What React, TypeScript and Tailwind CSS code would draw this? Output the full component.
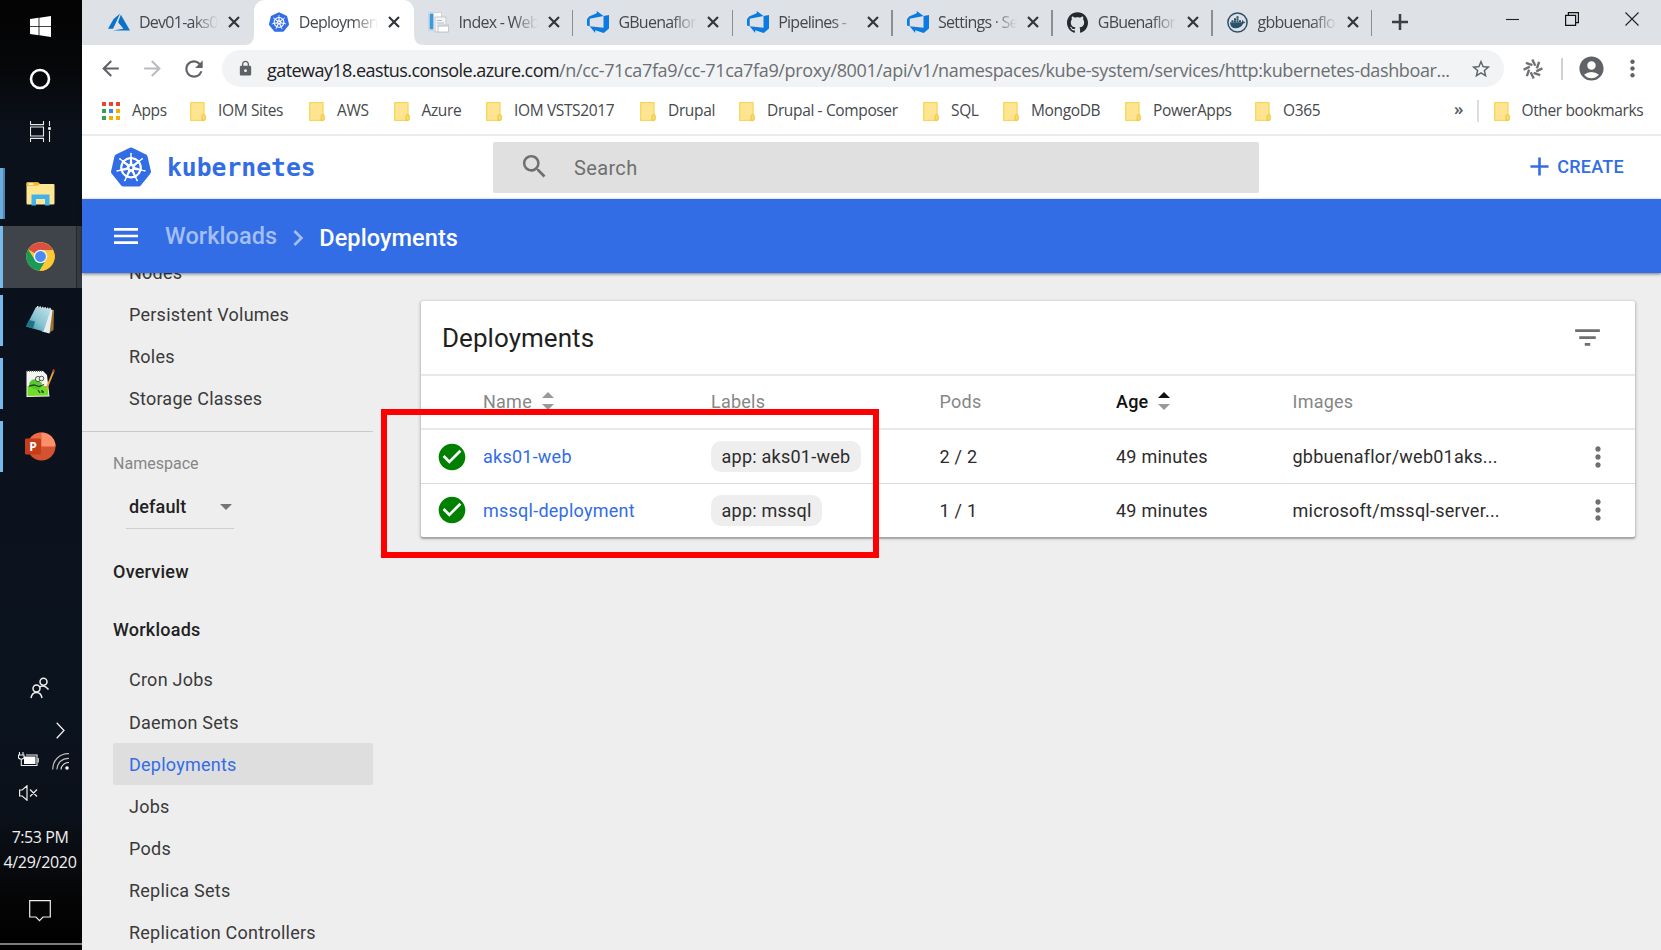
import type { ReactNode } from 'react';
import {
  MdAccountCircle,
  MdAdd,
  MdArrowBack,
  MdArrowForward,
  MdCheckCircle,
  MdChevronRight,
  MdFilterList,
  MdLock,
  MdMenu,
  MdMoreVert,
  MdRefresh,
  MdSearch,
  MdStarBorder,
} from 'react-icons/md';
import { SiGithub, SiKubernetes } from 'react-icons/si';

/* ---------- Taskbar ---------- */

function TaskItem({ className, children }: { className: string; children: ReactNode }) {
  return <div className={`flex w-full shrink-0 items-center justify-center pr-[1.5px] ${className}`}>{children}</div>;
}

function ChromeIcon() {
  return (
    <svg width="29" height="29" viewBox="0 0 29 29">
      <circle cx="14.5" cy="14.5" r="14.3" fill="#fcc934" />
      <path d="M14.5 14.5 L2.1 7.35 A14.3 14.3 0 0 1 26.9 7.9 L14.5 7.9 Z" fill="#d94f43" />
      <path d="M2.1 7.35 A14.3 14.3 0 0 0 13.6 28.8 L20.2 17.8 L14.5 14.5 L8.8 17.8 Z" fill="#1a9a57" />
      <path d="M14.5 7.9 L26.9 7.9 A14.3 14.3 0 0 1 13.6 28.8 L20.2 17.8 Z" fill="#fcc934" />
      <circle cx="14.5" cy="14.5" r="6.8" fill="#f1f1f1" />
      <circle cx="14.5" cy="14.5" r="5.4" fill="#4a8af4" />
    </svg>
  );
}

function Taskbar() {
  return (
    <div className="flex h-[950px] w-[82px] shrink-0 flex-col bg-[linear-gradient(to_bottom,#030303_0%,#060709_7%,#0b111b_14%,#0b131f_75%,#0b111a_86%,#050505_95%,#000_100%)] font-['Open_Sans',sans-serif] text-[#f0f0f0]">
      <TaskItem className="h-[53px]">
        <svg width="21" height="21" viewBox="0 0 21 21" fill="#fff">
          <path d="M0 3 L8.6 1.8 V10 H0 Z M9.4 1.7 L21 0 V10 H9.4 Z M0 10.8 H8.6 V19.2 L0 18 Z M9.4 10.8 H21 V21 L9.4 19.3 Z" />
        </svg>
      </TaskItem>
      <TaskItem className="h-[52px]">
        <svg width="22" height="22" viewBox="0 0 22 22">
          <circle cx="11" cy="11" r="9" fill="none" stroke="#fff" strokeWidth="2.6" />
        </svg>
      </TaskItem>
      <TaskItem className="h-[53px]">
        <svg width="21" height="21" viewBox="0 0 21 21" fill="none" stroke="#e8e8e8" strokeWidth="1.1">
          <path d="M.5 0 V3.6 H13.5 V0 M.5 21 V17.4 H13.5 V21 M.5 6 H13.5 V15 H.5 Z M19.5 0 V5 M19.5 10 V21" />
          <rect x="18.2" y="6.2" width="2.6" height="2.6" fill="#fff" stroke="none" />
        </svg>
      </TaskItem>
      <TaskItem className="relative mt-2.5 h-[51px]">
        <div className="absolute inset-y-0 left-0 w-[5px] border-r-2 border-[#5084ab] bg-[#6aaee0]" />
        <svg width="29" height="24" viewBox="0 0 29 24">
          <path d="M.5 1.5 Q.5 .5 1.5 .5 H12 L14 2 H27.500 Q28.500 2 28.500 3 V21 Q28.500 22.500 27.500 22.500 H1.500 Q.5 22.500 .5 21 Z" fill="#ffe693" />
          <path d="M.5 1.5 Q.5 .3 1.5 .3 H12 L13.500 1.800 L12 3.800 H.5 Z" fill="#f2b92d" />
          <rect x="2.500" y="1.300" width="5" height="1.500" fill="#fff" />
          <path d="M5.500 23.500 V12.500 H23.500 V23.500 H19 V17 H10 V23.500 Z" fill="#3fb3ea" />
        </svg>
      </TaskItem>
      <TaskItem className="relative mt-[7px] h-[62px] bg-[#3f434a] pb-px">
        <div className="absolute inset-y-0 left-0 w-[3px] bg-[#76b9ed]" />
        <div className="absolute inset-y-0 right-0 w-[6px] border-l border-[#23262b] bg-[#363a41]" />
        <ChromeIcon />
      </TaskItem>
      <TaskItem className="relative mt-[7px] h-[51px] pb-0.5">
        <div className="absolute inset-y-0 left-0 w-[3px] bg-[#76b9ed]" />
        <svg width="29" height="28" viewBox="0 0 29 28">
          <defs>
            <linearGradient id="pad" x1="0" y1="1" x2="1" y2="0">
              <stop offset="0" stopColor="#2d8ba0" />
              <stop offset=".45" stopColor="#86c3d1" />
              <stop offset="1" stopColor="#c6e4ea" />
            </linearGradient>
          </defs>
          <path d="M24 3.500 L28 4 L27.500 24 L23 27 Z" fill="#9c7136" />
          <path d="M22 3 L26.500 4 L23.500 27.500 L16 25.500 Z" fill="#e8eef0" />
          <path d="M10 1 L25 3 L17.500 25.500 L0 20.500 Z" fill="url(#pad)" />
          <path d="M3 14 L9 15.500 L7 22.500 L0 20.500 Z" fill="#1f7487" />
          <path d="M11 .800 L25 3" stroke="#dfe9ea" strokeWidth="1.800" strokeDasharray="1.500 1" />
        </svg>
      </TaskItem>
      <TaskItem className="relative mt-3 h-[51px]">
        <div className="absolute inset-y-0 left-0 w-[3px] bg-[#76b9ed]" />
        <svg width="29" height="29" viewBox="0 0 29 29">
          <path d="M.5 2 H17 L21 6 L23.500 27.500 L.5 28 Z" fill="#f4f5f1" />
          <path d="M1.500 17 H21.500 L22.500 26.500 L1.500 27 Z" fill="#6fdc2a" />
          <path d="M1 2.300 H16" stroke="#777" strokeWidth="1.600" strokeDasharray="1 1" />
          <path d="M3 15 Q5 9 11 10.500 L16 14 L14 20 Q8 22 5 18 Z" fill="#55c92d" />
          <circle cx="12" cy="10" r="2.600" fill="#e7f2e1" stroke="#333" strokeWidth=".8" />
          <circle cx="15.500" cy="9.500" r="2.300" fill="#e7f2e1" stroke="#333" strokeWidth=".8" />
          <path d="M3 17 L8 16 L13 17.500 L18 15.500 M12 21 L14 24 M16 21 V23 H18" stroke="#25451a" strokeWidth="1.300" fill="none" />
          <path d="M27 1.500 L28.500 2.500 L21.500 19.500 L19.500 21.500 L19.800 18.500 Z" fill="#e8a23a" />
          <path d="M27 0 L29 1 L28 3.500 L26.200 2.700 Z" fill="#bb3f36" />
        </svg>
      </TaskItem>
      <TaskItem className="relative mt-3 h-[51px]">
        <div className="absolute inset-y-0 left-0 w-[3px] bg-[#76b9ed]" />
        <svg width="31" height="29" viewBox="0 0 31 29">
          <circle cx="16.500" cy="14.500" r="14" fill="#d35230" />
          <path d="M16.500 .5 A14 14 0 0 0 2.500 14.500 H16.500 Z" fill="#ed6c47" />
          <path d="M16.500 .5 A14 14 0 0 1 30.500 14.500 H16.500 Z" fill="#ff8f6b" />
          <rect x="0" y="6.500" width="16" height="16" rx="1.300" fill="#c43e1c" />
          <text x="8" y="18.800" textAnchor="middle" fontSize="12" fontWeight="700" fill="#fff">P</text>
        </svg>
      </TaskItem>
      <div className="flex-1" />
      <TaskItem className="h-[42px]">
        <svg width="20" height="22" viewBox="0 0 20 22" fill="none" stroke="#f0f0f0" strokeWidth="1.500">
          <circle cx="13.500" cy="4.700" r="3.500" />
          <path d="M9 10.500 Q13.500 6.500 18.500 12.500" />
          <circle cx="6.500" cy="11.500" r="3.500" fill="#0b121d" />
          <path d="M1 21 Q2 15.500 6.500 15.500 Q11 15.500 12 21" />
        </svg>
      </TaskItem>
      <div className="flex h-[43px] items-center justify-end pr-[17px]">
        <svg width="9" height="17" viewBox="0 0 9 17" fill="none" stroke="#eee" strokeWidth="1.300">
          <path d="M.7 .7 L8 8.500 L.7 16.300" />
        </svg>
      </div>
      <div className="flex h-[20px] items-start justify-between pr-3 pl-[18px]">
        <svg width="21" height="15" viewBox="0 0 21 15" fill="none" stroke="#eee" strokeWidth="1.100">
          <path d="M1.500 0 V3 M5 0 V3 M.5 3 H6 V6 Q3.300 8.500 .5 6 Z M3.300 7.500 V13.500 H19 V3 H8" />
          <rect x="6" y="4.500" width="11.500" height="7.500" fill="#fff" stroke="none" />
          <path d="M20.200 6 V10.500" />
        </svg>
        <svg className="mt-px" width="18" height="17" viewBox="0 0 18 17" fill="none" stroke="#bbb" strokeWidth="1.200">
          <path d="M.7 16.500 A15.500 15.500 0 0 1 17 .7" />
          <path d="M4.800 16.500 A11.500 11.500 0 0 1 17 5.300" />
          <path d="M9 16.500 A7.500 7.500 0 0 1 17 9.500" stroke="#ddd" />
          <circle cx="15" cy="15" r="1.800" fill="#fff" stroke="none" />
        </svg>
      </div>
      <div className="mt-[10px] flex h-[22px] items-center pl-[19px]">
        <svg width="19" height="16" viewBox="0 0 19 16" fill="none" stroke="#eee" strokeWidth="1.200">
          <path d="M.6 5 H3.200 L8 .8 V15.200 L3.200 11 H.6 Z M11 4.500 L18 11.500 M18 4.500 L11 11.500" />
        </svg>
      </div>
      <div className="mt-[21px] h-[25px] pr-0.5 text-center text-[16px] leading-[25px] tracking-[-0.45px] whitespace-nowrap">7:53 PM</div>
      <div className="h-[25px] pr-0.5 text-center text-[16px] leading-[25px] tracking-[-0.3px] whitespace-nowrap">4/29/2020</div>
      <TaskItem className="mt-[25px] h-[22px]">
        <svg width="22" height="22" viewBox="0 0 22 22" fill="none" stroke="#eee" strokeWidth="1.200">
          <path d="M.7 .7 H21.300 V17 H14 L10.500 20.700 L7 17 H.7 Z" />
        </svg>
      </TaskItem>
      <div className="mt-[21px] h-[7px] border-t-2 border-[#7a7c7f] bg-black" />
    </div>
  );
}

/* ---------- Browser chrome ---------- */

const devopsIcon = (
  <svg width="22" height="22" viewBox="0 0 24 24" fill="#0a7be0">
    <path d="M0 8.877L2.247 5.910l8.405-3.416V.022l7.370 5.393L2.966 8.338v8.225L0 15.707zm24-4.450v14.651l-5.753 4.900-9.303-3.057v3.056l-5.978-7.416 15.057 1.798V5.415z" />
  </svg>
);

const tabs: { label: string; icon: ReactNode; active?: boolean; divider?: boolean }[] = [
  {
    label: 'Dev01-aks0',
    icon: (
      <svg width="22" height="22" viewBox="0 0 24 24" fill="#0a72c8">
        <path d="M5.483 21.300H24L14.025 4.013l-3.038 8.347 5.836 6.938L5.483 21.300zM13.230 2.700L6.105 8.677 0 19.253h5.505v.014L13.230 2.700z" />
      </svg>
    ),
  },
  { label: 'Deploymen', icon: <SiKubernetes size={20} color="#326de6" />, active: true },
  {
    label: 'Index - Web',
    icon: (
      <svg width="21" height="21" viewBox="0 0 21 21">
        <rect x=".5" y=".5" width="13" height="18" fill="#fff" stroke="#cfd3d6" />
        <rect x="1.500" y="1.500" width="4" height="16" fill="#3a9bd8" />
        <rect x="7" y="5" width="11" height="15" fill="#f3f5f6" stroke="#c3c8cb" />
        <path d="M9 8.500 H14 M9 11 H16" stroke="#b5babd" />
        <rect x="10" y="13" width="10.500" height="7" fill="#fff" stroke="#c3c8cb" />
        <path d="M10 14 H20" stroke="#b5babd" />
      </svg>
    ),
    divider: true,
  },
  { label: 'GBuenaflor', icon: devopsIcon, divider: true },
  { label: 'Pipelines - ', icon: devopsIcon, divider: true },
  { label: 'Settings · Se', icon: devopsIcon, divider: true },
  { label: 'GBuenaflor', icon: <SiGithub size={21} color="#24292e" />, divider: true },
  {
    label: 'gbbuenaflo',
    icon: (
      <svg width="21" height="21" viewBox="0 0 21 21">
        <circle cx="10.500" cy="10.500" r="9.600" fill="none" stroke="#2b5169" strokeWidth="1.500" />
        <path d="M3 10.200 H14.800 Q15.500 8.800 15 7.800 Q16.300 8.300 16.600 9.700 Q17.700 9.500 18.500 10 Q17.800 11.400 16.200 11.500 Q14 16.300 8.500 16.300 Q3.300 16.300 3 10.200 Z M4.500 8.200 H6.500 V10 H4.500 Z M7 8.200 H9 V10 H7 Z M9.500 8.200 H11.500 V10 H9.500 Z M12 8.200 H14 V10 H12 Z M7 6.200 H9 V8 H7 Z M9.500 6.200 H11.500 V8 H9.500 Z M9.500 4.200 H11.500 V6 H9.500 Z" fill="#2b5169" />
      </svg>
    ),
    divider: true,
  },
];

function CloseGlyph() {
  return (
    <svg width="12" height="12" viewBox="0 0 12 12" stroke="#33373b" strokeWidth="2.200">
      <path d="M1 1 L11 11 M11 1 L1 11" />
    </svg>
  );
}

function TabStrip() {
  return (
    <div className="flex h-[45px] bg-[#dee1e6] pl-3">
      {tabs.map((tab, i) => (
        <div
          key={i}
          className={`relative flex w-[159.800px] shrink-0 items-center pb-px pl-[14px] ${tab.active ? 'rounded-t-[11px] bg-white' : ''}`}
        >
          {tab.active && (
            <>
              <svg className="absolute bottom-0 -left-[10px]" width="10" height="10" viewBox="0 0 10 10">
                <path d="M10 0 V10 H0 Q10 10 10 0 Z" fill="#fff" />
              </svg>
              <svg className="absolute -right-[10px] bottom-0" width="10" height="10" viewBox="0 0 10 10">
                <path d="M0 0 V10 H10 Q0 10 0 0 Z" fill="#fff" />
              </svg>
            </>
          )}
          <div className="flex w-[22px] shrink-0 justify-center">{tab.icon}</div>
          <div className="ml-[9px] w-[79px] shrink-0 overflow-hidden [mask-image:linear-gradient(to_right,black_68%,transparent)] text-[16px] leading-6 tracking-[-0.750px] whitespace-nowrap text-[#45494d]">
            {tab.label}
          </div>
          <div className="ml-[10px] shrink-0">
            <CloseGlyph />
          </div>
          {tab.divider && <div className="absolute top-[10px] right-0 h-[26px] w-[1.500px] bg-[#8b8f94]" />}
        </div>
      ))}
      <div className="flex w-[56px] items-center justify-center pb-px">
        <svg width="16" height="16" viewBox="0 0 16 16" stroke="#3c4043" strokeWidth="2.500">
          <path d="M8 0 V16 M0 8 H16" />
        </svg>
      </div>
      <div className="ml-auto flex h-[38px] items-center gap-[46px] pr-[22px]">
        <svg width="13" height="13" viewBox="0 0 13 13" stroke="#222" strokeWidth="1.100">
          <path d="M0 6.500 H13" />
        </svg>
        <svg width="14" height="14" viewBox="0 0 14 14" fill="none" stroke="#111" strokeWidth="1.200">
          <path d="M.6 3.400 H10.600 V13.400 H.6 Z M3.400 3.400 V.6 H13.400 V10.600 H10.600" />
        </svg>
        <svg width="14" height="14" viewBox="0 0 14 14" stroke="#222" strokeWidth="1.100">
          <path d="M.5 .5 L13.500 13.500 M13.500 .5 L.5 13.500" />
        </svg>
      </div>
    </div>
  );
}

function AddressBar() {
  return (
    <div className="flex h-[47px] items-center bg-white pl-[16px] text-[#5f6368]">
      <MdArrowBack size={25} />
      <MdArrowForward size={25} className="ml-[17px] text-[#b9bbbe]" />
      <MdRefresh size={26} className="ml-[16px]" />
      <div className="ml-[15px] flex h-[37px] w-[1282px] shrink-0 items-center rounded-full bg-[#f1f3f4] pl-[15px]">
        <MdLock size={17} />
        <div className="mt-[2px] ml-[13px] w-[1185px] shrink-0 text-[18px] leading-6 tracking-[-0.360px] whitespace-nowrap text-[#6b6f73]">
          <span className="tracking-[-0.560px] text-[#202124]">gateway18.eastus.console.azure.com</span>
          /n/cc-71ca7fa9/cc-71ca7fa9/proxy/8001/api/v1/namespaces/kube-system/services/http:kubernetes-dashboar...
        </div>
        <MdStarBorder size={22} className="ml-[18px] shrink-0" />
      </div>
      <svg className="ml-[19px] shrink-0" width="20" height="20" viewBox="0 0 20 20" stroke="#6f7174" strokeWidth="2.400" fill="none">
        {[0, 45, 90, 135, 180, 225, 270, 315].map((a) => (
          <path key={a} d="M12.300 6.800 L9.300 .6" transform={`rotate(${a} 10 10)`} />
        ))}
      </svg>
      <div className="ml-[18px] h-[22px] w-[2px] shrink-0 bg-[#ced2d5]" />
      <MdAccountCircle size={29} className="ml-[14px] shrink-0" />
      <MdMoreVert size={27} className="ml-[13px] shrink-0" />
    </div>
  );
}

function FolderIcon() {
  return (
    <svg className="shrink-0" width="16" height="19" viewBox="0 0 16 19">
      <path d="M.7 .7 H14 V18.300 H.7 Z" fill="#ffe591" stroke="#f7d759" strokeWidth="1.300" />
      <path d="M12 18.300 V14 Q12.200 12.500 13.700 12.500 Q15.300 12.500 15.300 14 V17 Q15.300 18.300 14 18.300 Z" fill="#fbdc66" stroke="#ecc23e" strokeWidth=".9" />
    </svg>
  );
}

function Bookmark({ label, className }: { label: string; className: string }) {
  return (
    <div className={`flex shrink-0 items-center gap-3 whitespace-nowrap ${className}`}>
      <FolderIcon />
      {label}
    </div>
  );
}

const appDots = [
  'bg-[#ea4335]', 'bg-[#ea4335]', 'bg-[#ea4335]',
  'bg-[#34a05a]', 'bg-[#2c8af0]', 'bg-[#f9ab00]',
  'bg-[#34a05a]', 'bg-[#f9ab00]', 'bg-[#f9ab00]',
];

function BookmarksBar() {
  return (
    <div className="flex h-[44px] items-center border-b-2 border-[#ebebeb] bg-white pb-1 pl-5 text-[15.500px] tracking-[-0.360px] text-[#45494d]">
      <div className="grid grid-cols-3 gap-x-[3px] gap-y-[3px]">
        {appDots.map((c, i) => (
          <div key={i} className={`size-[4px] ${c}`} />
        ))}
      </div>
      <div className="ml-[12px] w-[58px] shrink-0">Apps</div>
      <Bookmark label="IOM Sites" className="w-[119px]" />
      <Bookmark label="AWS" className="w-[84.500px]" />
      <Bookmark label="Azure" className="w-[92.500px]" />
      <Bookmark label="IOM VSTS2017" className="w-[154px]" />
      <Bookmark label="Drupal" className="w-[99px]" />
      <Bookmark label="Drupal - Composer" className="w-[184px]" />
      <Bookmark label="SQL" className="w-[80px]" />
      <Bookmark label="MongoDB" className="w-[122px]" />
      <Bookmark label="PowerApps" className="w-[130px]" />
      <Bookmark label="O365" className="w-[199px]" />
      <div className="-mt-1 w-[23px] text-[17px] font-semibold text-[#55595d]">»</div>
      <div className="mr-[15px] h-[22px] w-[1.500px] bg-[#dadce0]" />
      <Bookmark label="Other bookmarks" className="" />
    </div>
  );
}

/* ---------- Dashboard ---------- */

function DashboardHeader() {
  return (
    <div className="flex h-[63px] items-center bg-white pl-[29px]">
      <SiKubernetes size={40} color="#326de6" className="mb-px shrink-0" />
      <div className="mt-px ml-[16px] w-[326px] shrink-0 font-['DejaVu_Sans_Mono',monospace] text-[24.700px] font-bold text-[#326de6]">kubernetes</div>
      <div className="flex h-[51px] w-[766px] shrink-0 items-center rounded-[2px] bg-[#e0e0e0] pl-[26px] text-[#6f6f6f]">
        <MdSearch size={31} className="mb-0.5" />
        <span className="ml-[24px] text-[20px] tracking-[0.350px]">Search</span>
      </div>
      <div className="mb-0.5 ml-auto flex items-center pr-[37px] text-[18px] font-medium tracking-[0.250px] text-[#326de6]">
        <MdAdd size={31} className="mr-[2px]" />
        CREATE
      </div>
    </div>
  );
}

function Breadcrumbs() {
  return (
    <div className="relative z-10 flex h-[74px] shrink-0 items-center bg-[#326de6] pl-[28px] text-[23.500px] tracking-[0.080px] text-white shadow-[0_1px_3px_rgba(0,0,0,0.5)]">
      <MdMenu size={32} />
      <span className="mt-[2px] ml-[23px] font-medium text-[#a3bff4]">Workloads</span>
      <MdChevronRight size={32} className="mr-[5px] ml-[5px] mt-[3px] text-[#a3bff4]" />
      <span className="mt-[5px] font-medium">Deployments</span>
    </div>
  );
}

function NavItem({ label, active }: { label: string; active?: boolean }) {
  return (
    <div
      className={`flex h-[42.200px] shrink-0 items-center pl-4 ${active ? 'rounded-[2px] bg-[#dedede] text-[#326de6]' : 'text-[#3a3a3a]'}`}
    >
      {label}
    </div>
  );
}

function SideNav() {
  return (
    <div className="flex h-[677px] w-[291px] shrink-0 flex-col overflow-hidden text-[18px] tracking-[0.240px]">
      <div className="-mt-[22px] pl-[31px]">
        {['Nodes', 'Persistent Volumes', 'Roles', 'Storage Classes'].map((l) => (
          <NavItem key={l} label={l} />
        ))}
      </div>
      <div className="mt-[11px] h-px shrink-0 bg-[#cbcbcb]" />
      <div className="mt-[20px] pl-[31px] text-[16px] leading-6 tracking-[0.020px] text-[#868686]">Namespace</div>
      <div className="mt-[10px] ml-[44px] flex h-[43px] w-[108px] shrink-0 items-center justify-between border-b border-[#cfcfcf] pr-[2px] pl-[3px] font-medium tracking-[0.150px] text-[#222]">
        default
        <svg width="12" height="6" viewBox="0 0 12 6" fill="#757575">
          <path d="M0 0 H12 L6 6 Z" />
        </svg>
      </div>
      <div className="mt-[30px] h-6 shrink-0 pl-[31px] leading-[26px] font-medium text-[#222]">Overview</div>
      <div className="mt-[34px] h-6 shrink-0 pl-[31px] leading-[26px] font-medium text-[#222]">Workloads</div>
      <div className="mt-[18px] pl-[31px]">
        {['Cron Jobs', 'Daemon Sets', 'Deployments', 'Jobs', 'Pods', 'Replica Sets', 'Replication Controllers'].map((l) => (
          <NavItem key={l} label={l} active={l === 'Deployments'} />
        ))}
      </div>
    </div>
  );
}

function SortArrows({ up }: { up: string }) {
  return (
    <svg width="12" height="18" viewBox="0 0 12 18">
      <path d="M0 6 L6 0 L12 6 Z" fill={up} />
      <path d="M0 12 H12 L6 18 Z" fill="#999" />
    </svg>
  );
}

const columns = 'grid grid-cols-[62px_228px_228.500px_176.500px_176.500px_1fr_76px] items-center';

const rows = [
  { name: 'aks01-web', label: 'app: aks01-web', pods: '2 / 2', age: '49 minutes', image: 'gbbuenaflor/web01aks...' },
  { name: 'mssql-deployment', label: 'app: mssql', pods: '1 / 1', age: '49 minutes', image: 'microsoft/mssql-server...' },
];

function DeploymentsCard() {
  return (
    <div className="mt-[28px] ml-[48px] h-[236px] w-[1214px] shrink-0 rounded-[2px] bg-white text-[18px] tracking-[0.240px] text-[#2c2c2c] shadow-[0_1px_3px_1px_rgba(0,0,0,0.22),0_2px_1px_rgba(0,0,0,0.14)]">
      <div className="flex h-[75px] items-center justify-between border-b-2 border-[#e8e8e8] pr-[31px] pl-[21px]">
        <span className="mt-[2px] text-[26px] tracking-[0.050px] text-[#1f1f1f]">Deployments</span>
        <MdFilterList size={33} className="text-[#6f6f6f]" />
      </div>
      <div className={`${columns} h-[54px] border-b-2 border-[#e8e8e8] pb-[2px] text-[#868686]`}>
        <span />
        <span className="flex items-center gap-[10px]">Name <SortArrows up="#999" /></span>
        <span>Labels</span>
        <span>Pods</span>
        <span className="flex items-center gap-[9px] font-medium text-[#111]">Age <SortArrows up="#111" /></span>
        <span>Images</span>
        <span />
      </div>
      {rows.map((r, i) => (
        <div key={r.name} className={`${columns} ${i === 0 ? 'h-[54px] border-b border-[#dcdcdc]' : 'h-[53px] pb-px'}`}>
          <MdCheckCircle size={32} color="#008000" className="ml-[15px]" />
          <span className="text-[#326de6]">{r.name}</span>
          <span className="w-fit rounded-[10px] bg-[#eeeeee] px-[10.500px] leading-[31px]">{r.label}</span>
          <span>{r.pods}</span>
          <span>{r.age}</span>
          <span>{r.image}</span>
          <MdMoreVert size={32} className="ml-[23px] text-[#707070]" />
        </div>
      ))}
    </div>
  );
}

export default function App() {
  return (
    <div className="relative flex h-[950px] w-[1661px] overflow-hidden bg-[#eeeeee] font-['Roboto',sans-serif]">
      <Taskbar />
      <div className="flex min-w-0 flex-1 flex-col">
        <div className="shrink-0 font-['Open_Sans',sans-serif]">
          <TabStrip />
          <AddressBar />
          <BookmarksBar />
        </div>
        <DashboardHeader />
        <Breadcrumbs />
        <div className="flex">
          <SideNav />
          <DeploymentsCard />
        </div>
      </div>
      <div className="absolute top-[409px] left-[381px] h-[149px] w-[498px] border-[6px] border-[#ff0000]" />
    </div>
  );
}
